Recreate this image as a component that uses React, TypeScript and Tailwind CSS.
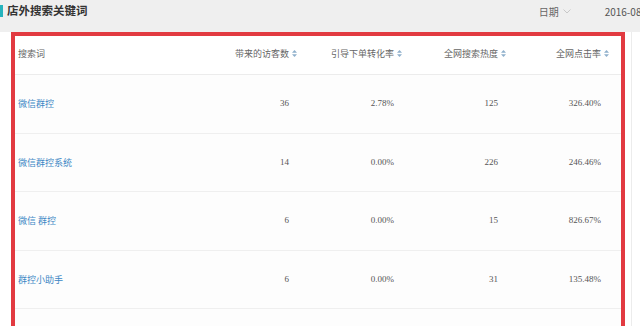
import React from "react";

type Row = { kw: string; visitors: string; conv: string; heat: string; ctr: string };

const rows: Row[] = [
  { kw: "微信群控", visitors: "36", conv: "2.78%", heat: "125", ctr: "326.40%" },
  { kw: "微信群控系统", visitors: "14", conv: "0.00%", heat: "226", ctr: "246.46%" },
  { kw: "微信 群控", visitors: "6", conv: "0.00%", heat: "15", ctr: "826.67%" },
  { kw: "群控小助手", visitors: "6", conv: "0.00%", heat: "31", ctr: "135.48%" },
];

const cjk = { fontFamily: '"Noto Sans CJK SC", "Noto Sans", sans-serif' };
const num = { fontFamily: '"Liberation Serif", "Noto Sans CJK SC", serif' };

function SortIcon() {
  return (
    <svg width="5" height="7" viewBox="0 0 5 7" className="shrink-0">
      <path d="M2.5 0 L5 2.8 H0 Z" fill="#8fb0cc" />
      <path d="M2.5 7 L5 4.2 H0 Z" fill="#8fb0cc" />
    </svg>
  );
}

const grid = "grid grid-cols-[195px_87px_105px_104px_103px] pr-[12px]";

function HeadCell({ label }: { label: string }) {
  return (
    <div className="flex items-center justify-end gap-[3px]">
      <span>{label}</span>
      <SortIcon />
    </div>
  );
}

export default function App() {
  return (
    <div className="w-[640px] h-[326px] overflow-hidden bg-white text-[#666]" style={cjk}>
      {/* page title bar */}
      <div className="h-[32px] bg-[#efefef] flex items-start overflow-hidden">
        <div className="mt-[5px] w-[3px] h-[12px] bg-[#26b3bd] shrink-0" />
        <div className="ml-[4px] mt-[2px] text-[11.5px] leading-[17px] font-bold text-[#333] shrink-0">店外搜索关键词</div>
        <div className="ml-auto mr-[-16px] mt-[4px] flex items-center shrink-0 text-[10px] leading-[15px] text-[#666]">
          <span>日期</span>
          <svg width="8" height="5" viewBox="0 0 8 5" className="ml-[4px]">
            <path d="M0.5 0.5 L4 4 L7.5 0.5" fill="none" stroke="#c8c8c8" strokeWidth="1" />
          </svg>
          <span className="ml-[34px] whitespace-nowrap text-[#555]">2016-08-01</span>
        </div>
      </div>

      <div className="flex">
        <div className="w-[11px] shrink-0" />
        <div className="w-[614px] shrink-0 h-[300px] border-4 border-b-0 border-[#e23a41] bg-white">
          {/* header row */}
          <div className={`${grid} h-[39px] items-center border-b border-[#ececec] text-[9px] text-[#666] pb-[3px]`}>
            <div className="pl-[3px]">搜索词</div>
            <HeadCell label="带来的访客数" />
            <HeadCell label="引导下单转化率" />
            <HeadCell label="全网搜索热度" />
            <HeadCell label="全网点击率" />
          </div>
          {rows.map((r) => (
            <div key={r.kw} className={`${grid} h-[58.5px] items-center border-b border-[#efefef] bg-[#fdfdfd]`}>
              <div className="pl-[3px] text-[9px] text-[#3b86c4] whitespace-pre">{r.kw}</div>
              <div className="text-right pr-[8px] text-[9px] text-[#555]" style={num}>{r.visitors}</div>
              <div className="text-right pr-[8px] text-[9px] text-[#555]" style={num}>{r.conv}</div>
              <div className="text-right pr-[8px] text-[9px] text-[#555]" style={num}>{r.heat}</div>
              <div className="text-right pr-[8px] text-[9px] text-[#555]" style={num}>{r.ctr}</div>
            </div>
          ))}
          {/* next row, below the fold */}
          <div className="h-[58px] bg-[#fdfdfd]" />
        </div>
        <div className="w-[6px] shrink-0" />
        <div className="w-px h-[300px] bg-[#ececec]" />
      </div>
    </div>
  );
}
